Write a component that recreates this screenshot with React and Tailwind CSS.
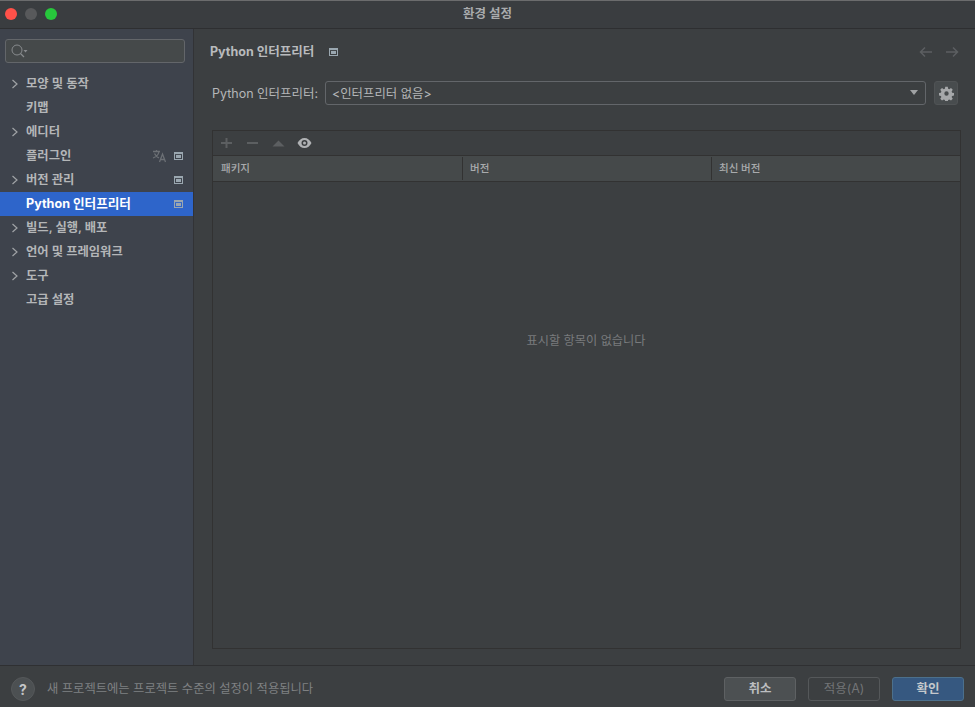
const FONT = '"Inter","Noto Sans CJK KR",sans-serif';
function Chevron(){return <svg width="8" height="10" viewBox="0 0 8 10" fill="none" className="absolute left-[11px] top-[7px]"><path d="M1.500 1 L6 5 L1.500 9" stroke="#a0a3a6" strokeWidth="1.200"/></svg>}
function Proj({className=""}){return <svg width="9" height="8" viewBox="0 0 9 8" className={className}><rect x="0.500" y="0.500" width="8" height="7" fill="none" stroke="#9aa7b0" strokeWidth="1"/><rect x="2" y="3" width="5" height="3" fill="#9aa7b0"/><rect x="0.500" y="0.500" width="8" height="1.600" fill="#9aa7b0"/></svg>}
function Item({label,chev,proj,trans,active}){
 return <div className={`relative h-6 flex items-center pl-[26px] pr-[10px] ${active?"bg-[#2e65ca] text-white font-bold text-[12.6px]":"text-[#b4b6b8] font-semibold text-[12.3px]"}`}>
  {chev&&<Chevron/>}<span className="flex-1 whitespace-nowrap">{label}</span>
  {trans&&<svg width="15" height="14" viewBox="0 0 15 14" fill="none" stroke="#6c7075" strokeWidth="1.300" className="mr-[7px]"><path d="M1 2.500h7M4.500 1v1.500M7 2.500c-.5 3-3 5.500-6 6.500M2.500 4.500c1 2 2.500 3.500 4.500 4.500"/><path d="M7.500 13l3-8 3 8M8.600 10.500h4"/></svg>}
  {proj&&<Proj/>}
 </div>
}
export default function App(){
 return <div className="w-[975px] h-[707px] flex flex-col bg-[#3c3f41] overflow-hidden" style={{fontFamily:FONT}}>
  <div className="relative h-[29px] shrink-0 flex items-center justify-center bg-[#3a3d40] border-b border-[#2e2f31] border-t border-t-[#6b6c6d]">
   <div className="absolute left-[5px] top-[7px] flex gap-2">
    <span className="w-3 h-3 rounded-full bg-[#ff5149]"/><span className="w-3 h-3 rounded-full bg-[#58595b]"/><span className="w-3 h-3 rounded-full bg-[#27c73c]"/>
   </div>
   <span className="text-[12.5px] font-semibold text-[#a9abad]">환경 설정</span>
  </div>
  <div className="flex flex-1 min-h-0 border-b border-[#2f3032]">
   <div className="w-[194px] shrink-0 bg-[#3e434c] border-r border-[#323336]">
    <div className="ml-[5px] mr-[8px] mt-[10px] mb-[9px] h-6 rounded-[3px] border border-[#63666a] bg-[#45494a] flex items-center pl-[5px]">
     <svg width="17" height="15" viewBox="0 0 17 15" fill="none"><circle cx="6" cy="6" r="5" stroke="#888b8e" strokeWidth="1"/><path d="M9.500 9.500L13 13" stroke="#888b8e" strokeWidth="1.200"/><path d="M12.500 6h4l-2 2.500z" fill="#888b8e"/></svg>
    </div>
    <Item label="모양 및 동작" chev/>
    <Item label="키맵"/>
    <Item label="에디터" chev/>
    <Item label="플러그인" trans proj/>
    <Item label="버전 관리" chev proj/>
    <Item label="Python 인터프리터" active proj/>
    <Item label="빌드, 실행, 배포" chev/>
    <Item label="언어 및 프레임워크" chev/>
    <Item label="도구" chev/>
    <Item label="고급 설정"/>
   </div>
   <div className="flex-1 min-w-0 flex flex-col pl-[16px] pr-[14px]">
    <div className="h-[45px] flex items-center shrink-0">
     <span className="text-[12.5px] font-bold text-[#b9bbbd] whitespace-nowrap pt-[1px]">Python 인터프리터</span>
     <Proj className="ml-[15px] mt-[1px]"/>
     <div className="ml-auto flex gap-[12px] mr-[2px]">
      <svg width="14" height="12" viewBox="0 0 14 12" fill="none" stroke="#5c5f61" strokeWidth="1.500"><path d="M13 6H2M6 1.500L1.500 6 6 10.500"/></svg>
      <svg width="14" height="12" viewBox="0 0 14 12" fill="none" stroke="#5c5f61" strokeWidth="1.500"><path d="M1 6h11M8 1.500L12.500 6 8 10.500"/></svg>
     </div>
    </div>
    <div className="h-6 mt-[7px] flex items-center shrink-0 pl-[2px]">
     <span className="w-[113px] text-[12.5px] text-[#b4b6b8] whitespace-nowrap pt-[2px]">Python 인터프리터:</span>
     <div className="w-[601px] h-6 rounded-[3px] border border-[#63666a] flex items-center pl-[6px] pr-[6px] text-[12.4px] text-[#b4b6b8]">
      <span className="flex-1 pt-[2px]">&lt;인터프리터 없음&gt;</span>
      <svg width="10" height="6" viewBox="0 0 10 6"><path d="M1 0h8L5 5z" fill="#a0a2a4"/></svg>
     </div>
     <div className="ml-[8px] w-6 h-6 rounded-[3px] bg-[#484c4e] border border-[#505355] flex items-center justify-center">
      <svg width="15" height="15" viewBox="0 0 24 24" fill="#a6a8aa"><path fillRule="evenodd" d="M10 1h4l.6 3.200 1.900.8 2.700-1.800 2.800 2.800-1.800 2.700.8 1.900 3 .6v4l-3 .6-.8 1.900 1.800 2.700-2.800 2.800-2.700-1.800-1.900.8-.6 3.200h-4l-.6-3.200-1.900-.8-2.700 1.800-2.800-2.800 1.800-2.700-.8-1.900-3-.6v-4l3-.6.8-1.900L2 6l2.800-2.800 2.700 1.800 1.900-.8zM12 8.500a3.500 3.500 0 100 7 3.500 3.500 0 000-7z"/></svg>
     </div>
    </div>
    <div className="mt-[25px] mb-[16px] ml-[2px] flex-1 min-h-0 border border-[#323232] flex flex-col">
     <div className="h-[25px] shrink-0 flex items-center border-b border-[#323232] pl-[6px] gap-[11px]">
      <svg width="15" height="12" viewBox="0 0 15 12" stroke="#5c5f61" strokeWidth="2"><path d="M7.500 1v10M2 6h11"/></svg>
      <svg width="15" height="12" viewBox="0 0 15 12" stroke="#5c5f61" strokeWidth="2"><path d="M2 6h11"/></svg>
      <svg width="15" height="12" viewBox="0 0 15 12"><path d="M1.500 9.500L7.500 3.500l6 6z" fill="#5c5f61"/></svg>
      <svg width="15" height="12" viewBox="0 0 15 12"><path fillRule="evenodd" d="M0.500 6C2 3 4.500 1 7.500 1s5.500 2 7 5c-1.500 3-4 5-7 5S2 9 .5 6zm7-3a3 3 0 100 6 3 3 0 000-6z" fill="#b0b2b4"/><circle cx="7.500" cy="6" r="1.500" fill="#b0b2b4"/></svg>
     </div>
     <div className="h-[26px] shrink-0 grid grid-cols-[250px_249px_1fr] bg-[#45494a] border-b border-[#323232] text-[10.500px] font-medium text-[#a9abad]">
      <div className="flex items-center pl-[8px] border-r border-[#323232] my-[1px]">패키지</div>
      <div className="flex items-center pl-[7px] border-r border-[#323232] my-[1px]">버전</div>
      <div className="flex items-center pl-[7px]">최신 버전</div>
     </div>
     <div className="flex-1 flex items-center justify-center text-[12.2px] text-[#797b7d] pb-[148px] pr-[1px]">표시할 항목이 없습니다</div>
    </div>
   </div>
  </div>
  <div className="h-[41px] shrink-0 flex items-center pl-[11px] pr-[11px] pt-[5px]">
   <div className="w-[24px] h-[24px] rounded-full bg-[#4c5052] border border-[#55585a] flex items-center justify-center text-[14px] font-bold text-[#c4c6c8]">?</div>
   <span className="ml-[12px] text-[12.3px] text-[#7f8183] whitespace-nowrap pt-[1px]">새 프로젝트에는 프로젝트 수준의 설정이 적용됩니다</span>
   <div className="ml-auto flex gap-3">
    <div className="w-[72px] h-6 rounded-[3px] bg-[#4c5052] border border-[#5e6163] flex items-center justify-center text-[12.500px] font-semibold text-[#bcbec0]">취소</div>
    <div className="w-[72px] h-6 rounded-[3px] border border-[#55585a] flex items-center justify-center text-[12.500px] text-[#727476]">적용(A)</div>
    <div className="w-[72px] h-6 rounded-[3px] bg-[#365880] border border-[#4c708c] flex items-center justify-center text-[12.500px] font-semibold text-[#c4c8cc]">확인</div>
   </div>
  </div>
 </div>
}
